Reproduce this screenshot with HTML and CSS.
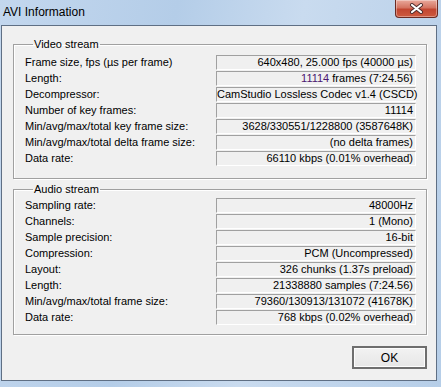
FILE: index.html
```html
<!DOCTYPE html>
<html lang="en">
<head>
    <meta charset="UTF-8">
    <title>AVI Information</title>
    <link rel="stylesheet" href="styles.css">
</head>
<body>
    <div class="window">
        <div class="titlebar">
            <span class="title">AVI Information</span>
            <div class="close">
                <svg width="15" height="11" viewBox="0 0 15 11">
                    <path d="M3 2 L12 9 M12 2 L3 9" stroke="#4a2a2a" stroke-width="4" stroke-linecap="round"/>
                    <path d="M3 2 L12 9 M12 2 L3 9" stroke="#ffffff" stroke-width="2.2" stroke-linecap="round"/>
                </svg>
            </div>
        </div>
        <div class="client">
            <fieldset class="group video">
                <legend>Video stream</legend>
                <div class="rows">
                    <span class="label">Frame size, fps (µs per frame)</span>
                    <span class="value">640x480, 25.000 fps (40000 µs)</span>
                    <span class="label">Length:</span>
                    <span class="value"><span class="num">11114</span> frames (7:24.56)</span>
                    <span class="label">Decompressor:</span>
                    <span class="value">CamStudio Lossless Codec v1.4 (CSCD)</span>
                    <span class="label">Number of key frames:</span>
                    <span class="value">11114</span>
                    <span class="label">Min/avg/max/total key frame size:</span>
                    <span class="value">3628/330551/1228800 (3587648K)</span>
                    <span class="label">Min/avg/max/total delta frame size:</span>
                    <span class="value">(no delta frames)</span>
                    <span class="label">Data rate:</span>
                    <span class="value">66110 kbps (0.01% overhead)</span>
                </div>
            </fieldset>
            <fieldset class="group audio">
                <legend>Audio stream</legend>
                <div class="rows">
                    <span class="label">Sampling rate:</span>
                    <span class="value">48000Hz</span>
                    <span class="label">Channels:</span>
                    <span class="value">1 (Mono)</span>
                    <span class="label">Sample precision:</span>
                    <span class="value">16-bit</span>
                    <span class="label">Compression:</span>
                    <span class="value">PCM (Uncompressed)</span>
                    <span class="label">Layout:</span>
                    <span class="value">326 chunks (1.37s preload)</span>
                    <span class="label">Length:</span>
                    <span class="value">21338880 samples (7:24.56)</span>
                    <span class="label">Min/avg/max/total frame size:</span>
                    <span class="value">79360/130913/131072 (41678K)</span>
                    <span class="label">Data rate:</span>
                    <span class="value">768 kbps (0.02% overhead)</span>
                </div>
            </fieldset>
            <div class="buttons">
                <button class="ok">OK</button>
            </div>
        </div>
    </div>
</body>
</html>
```

FILE: styles.css
```css
*{
    margin: 0;
    padding: 0;
    box-sizing: border-box;
}
body{
    width: 441px;
    height: 387px;
    overflow: hidden;
    background: linear-gradient(100deg, #c3d7ee 0%, #b4cde8 35%, #c9dbef 60%, #b6cee8 100%);
    font-family: "Liberation Sans", Arial, sans-serif;
    font-size: 11px;
    color: #000;
}
.window{
    display: flex;
    flex-direction: column;
    height: 387px;
}
.titlebar{
    height: 25px;
    display: flex;
    align-items: flex-start;
    justify-content: space-between;
}
.title{
    font-size: 12px;
    padding: 5px 0 0 3px;
    color: #000;
}
.close{
    width: 43px;
    height: 18px;
    margin-right: 3px;
    border: 1px solid #6b2a22;
    border-top: none;
    border-radius: 0 0 4px 4px;
    background: linear-gradient(#e9a99c 0%, #d47462 45%, #c24631 55%, #cd5a3f 100%);
    box-shadow: inset 0 0 0 1px rgba(255,255,255,0.35);
    display: flex;
    align-items: center;
    justify-content: center;
}
.client{
    flex: 1;
    margin: 0 4px 6px 1px;
    border: 1px solid #5f6f84;
    background: #f0f0f0;
    padding: 12px 9px 0 11px;
    display: flex;
    flex-direction: column;
}
.group{
    border: 1px solid #a0a0a0;
    box-shadow: 1px 1px 0 #fff, inset 1px 1px 0 #fff;
    padding: 0 10px 0 11px;
    min-width: 0;
}
.group legend{
    margin-left: 8px;
    padding: 0 1px;
    font-size: 11px;
    line-height: 13px;
}
.video{
    padding-top: 4px;
    padding-bottom: 12px;
}
.audio{
    margin-top: 4px;
    padding-top: 2px;
    padding-bottom: 9px;
}
.rows{
    display: grid;
    grid-template-columns: 1fr 200px;
    row-gap: 1px;
}
.label{
    line-height: 15px;
    white-space: nowrap;
}
.value{
    height: 15px;
    line-height: 13px;
    text-align: right;
    padding-right: 2px;
    border-top: 1px solid #a0a0a0;
    border-left: 1px solid #a0a0a0;
    border-right: 1px solid #fff;
    border-bottom: 1px solid #fff;
    white-space: nowrap;
}
.num{
    color: #4c1670;
}
.buttons{
    display: flex;
    justify-content: flex-end;
    margin-top: 11px;
}
.ok{
    width: 75px;
    height: 23px;
    font-family: "Liberation Sans", Arial, sans-serif;
    font-size: 12px;
    background: linear-gradient(#f2f2f2, #e6e6e6);
    border: 2px solid #6e6e6e;
    box-shadow: inset 0 0 0 1px #fcfcfc;
    color: #000;
}
```
